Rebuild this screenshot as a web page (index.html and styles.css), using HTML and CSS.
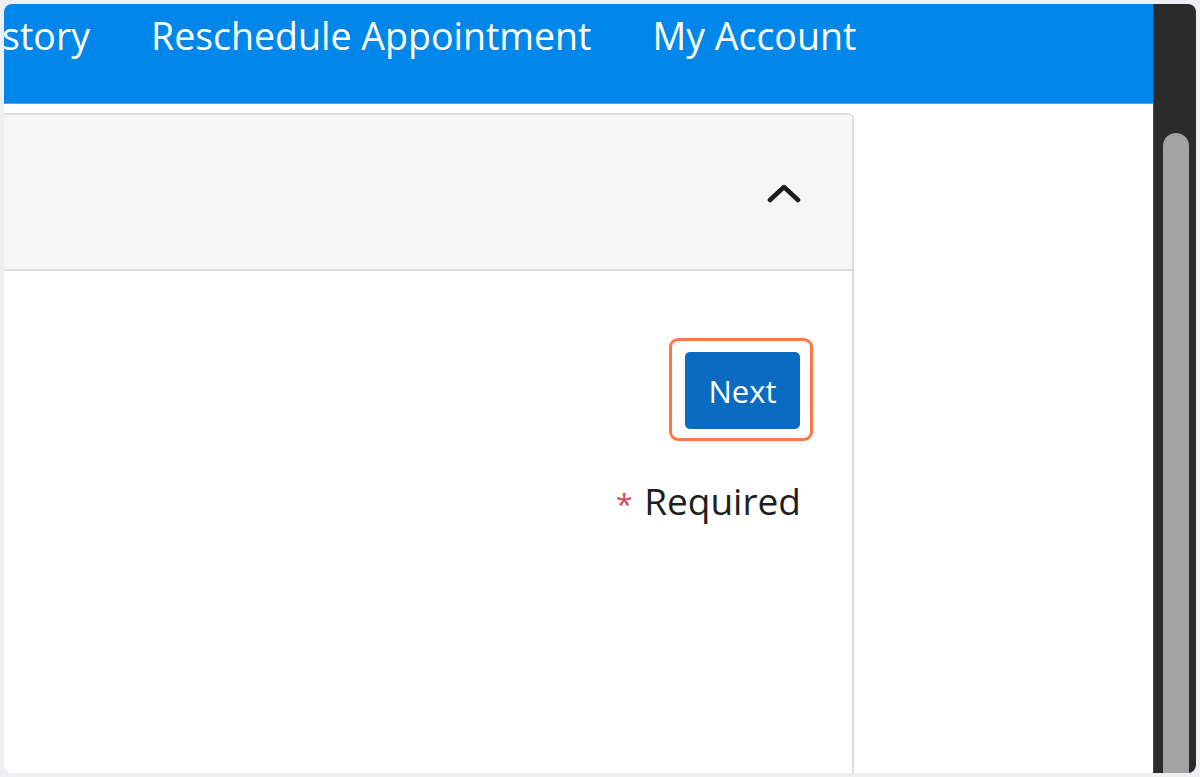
FILE: index.html
```html
<!DOCTYPE html>
<html lang="en">
<head>
    <meta charset="UTF-8">
    <meta name="viewport" content="width=device-width, initial-scale=1.0">
    <title>Schedule Appointment</title>
    <link rel="stylesheet" href="styles.css">
</head>
<body>
    <div class="frame">
        <div class="page">
            <nav class="top-nav">
                <a href="#" class="nav-link nav-first">History</a>
                <a href="#" class="nav-link">Reschedule Appointment</a>
                <a href="#" class="nav-link">My Account</a>
            </nav>

            <section class="panel">
                <div class="panel-header">
                    <button class="collapse-btn" aria-label="Collapse">
                        <svg width="34" height="22" viewBox="0 0 34 22">
                            <polyline points="3,18 17,5 31,18" fill="none" stroke="#1b1b1b" stroke-width="4.5" stroke-linecap="round" stroke-linejoin="round"/>
                        </svg>
                    </button>
                </div>
                <div class="panel-body">
                    <div class="actions">
                        <span class="highlight">
                            <button class="next-btn">Next</button>
                        </span>
                    </div>
                    <p class="required-note"><span class="asterisk">*</span> Required</p>
                </div>
            </section>
        </div>

        <div class="scrollbar">
            <div class="scroll-thumb"></div>
        </div>
    </div>
</body>
</html>
```

FILE: styles.css
```css
body {
    margin: 0;
    background: #efeef3;
    font-family: "Open Sans", "Noto Sans", sans-serif;
    color: #1e1e1e;
}

.frame {
    display: flex;
    margin: 4px;
    height: 769px;
    border-radius: 8px;
    overflow: hidden;
    background: #fff;
}

.page {
    flex: 1;
    overflow: hidden;
    background: #fff;
}

.top-nav {
    display: flex;
    gap: 61px;
    height: 99px;
    background: #0087e9;
    border-bottom: 1px solid #4aa8f0;
    margin-left: -39px;
    white-space: nowrap;
}
.nav-link {
    color: #fff;
    text-decoration: none;
    font-size: 37.5px;
    line-height: 64px;
}

.panel {
    width: 886px;
    margin: 9px 0 0 -40px;
    height: 700px;
    border: 2px solid #dedede;
    border-radius: 6px;
    background: #fff;
}
.panel-header {
    display: flex;
    justify-content: flex-end;
    align-items: center;
    height: 154px;
    padding-right: 51px;
    background: #f6f6f6;
    border-bottom: 2px solid #dcdcdc;
    border-radius: 6px 6px 0 0;
}
.collapse-btn {
    background: none;
    border: none;
    padding: 0;
    margin-top: 2px;
    cursor: pointer;
}
.collapse-btn svg {
    display: block;
}

.panel-body {
    padding: 67px 39px 0 0;
    text-align: right;
}
.actions {
    display: flex;
    justify-content: flex-end;
}
.highlight {
    display: inline-block;
    padding: 11px 10px 9px 13px;
    border: 3px solid #ff7843;
    border-radius: 9px;
}
.next-btn {
    display: block;
    width: 115px;
    height: 77px;
    background: #0b6bc1;
    color: #fff;
    border: none;
    border-radius: 5px;
    font-family: inherit;
    font-size: 31px;
    cursor: pointer;
}

.required-note {
    margin: 36px 12px 0 0;
    font-size: 37px;
    line-height: 48px;
}
.asterisk {
    color: #dc4452;
    font-size: 30px;
    margin-right: 2px;
}

.scrollbar {
    width: 43px;
    flex-shrink: 0;
    background: #2b2b2b;
    border-left: 1px solid #4a4a4a;
    padding-top: 129px;
    box-sizing: border-box;
    display: flex;
    justify-content: center;
}
.scroll-thumb {
    width: 26px;
    margin-left: 2px;
    background: #a3a3a3;
    border-radius: 13px 13px 0 0;
}
```
